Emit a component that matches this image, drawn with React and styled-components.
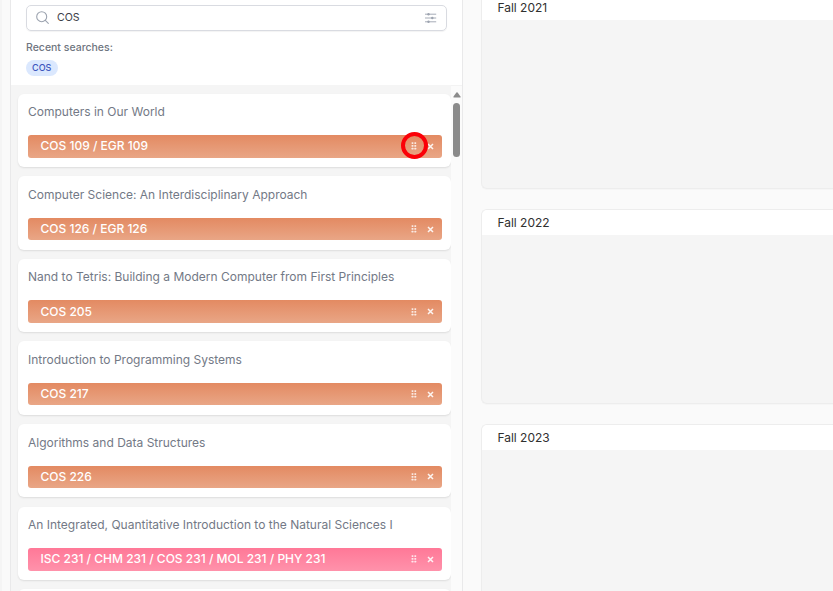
import React from "react";
import styled, { createGlobalStyle } from "styled-components";

const GlobalStyle = createGlobalStyle`
  *, *::before, *::after { box-sizing: border-box; }
  body {
    margin: 0;
    overflow: hidden;
    background: #fafafa;
    font-family: Inter, "Liberation Sans", sans-serif;
  }
`;

const Page = styled.div`
  display: flex;
  width: 100vw;
  height: 100vh;
  overflow: hidden;
`;

const LeftGutter = styled.div`
  flex: none;
  width: 10px;
  border-left: 2px solid #f5f5f5;
`;

const SearchPanel = styled.aside`
  flex: none;
  display: flex;
  flex-direction: column;
  width: 453px;
  border: solid #e9e9ea;
  border-width: 0 1px;
`;

const SearchHeader = styled.header`
  flex: none;
  height: 85px;
  padding: 5px 15px 0;
  background: #fff;
`;

const SearchBox = styled.label`
  display: flex;
  align-items: center;
  height: 26px;
  padding: 0 9px 1px 9px;
  border: 1px solid #d9dbe1;
  border-radius: 5px;
  box-shadow: 0 1px 1px rgba(0, 0, 0, 0.05);
`;

const SearchInput = styled.input`
  flex: 1;
  min-width: 0;
  margin-left: 8px;
  padding: 0;
  border: 0;
  outline: 0;
  background: transparent;
  color: #3d4149;
  font: 400 10.6px/18px Inter, sans-serif;
`;

const RecentLabel = styled.div`
  margin-top: 9px;
  color: #6f7580;
  font-size: 10.5px;
  font-weight: 500;
  line-height: 16px;
`;

const RecentChip = styled.button`
  display: block;
  width: 31.5px;
  height: 15.5px;
  margin-top: 4px;
  padding: 0;
  border: 0;
  border-radius: 8px;
  background: #dbe8fe;
  color: #3c55bd;
  font: 500 9px/15px Inter, sans-serif;
`;

const ResultsArea = styled.div`
  flex: 1;
  min-height: 0;
  display: flex;
  background: #f5f5f5;
`;

const ResultList = styled.div`
  flex: 1;
  display: flex;
  flex-direction: column;
  gap: 9.3px;
  padding: 8.7px 0 0 7.3px;
  overflow: hidden;
`;

const ResultCard = styled.article`
  flex: none;
  height: 73.3px;
  padding: 9.6px 8.7px 0 9.7px;
  border-radius: 6px;
  background: #fff;
  box-shadow: 0 1px 2px rgba(0, 0, 0, 0.1);
`;

const ResultTitle = styled.div`
  height: 32px;
  color: #737986;
  font-size: 12px;
  line-height: 18px;
  white-space: nowrap;
`;

const tones = {
  orange: "linear-gradient(#e38a62, #e9a686)",
  pink: "linear-gradient(#ff7897, #ff92ab)",
};

const CourseBar = styled.div`
  display: flex;
  align-items: center;
  height: 22.3px;
  padding: 0 7px 0 12.5px;
  border-radius: 3px;
  background: ${({ $tone }) => tones[$tone]};
  color: #fff;
`;

const CourseCode = styled.span`
  flex: 1;
  font-size: 12px;
  font-weight: 500;
  line-height: 18px;
  white-space: nowrap;
`;

const BarActions = styled.span`
  display: flex;
  align-items: center;
  gap: 8px;
`;

const DragHandle = styled.span`
  position: relative;
  display: flex;
  width: 8px;
  height: 10px;
`;

const HighlightRing = styled.span`
  position: absolute;
  top: -9.4px;
  left: -9.8px;
  width: 27px;
  height: 27px;
  border: 4px solid #fb0007;
  border-radius: 50%;
  z-index: 1;
`;

const Scrollbar = styled.div`
  flex: none;
  display: flex;
  flex-direction: column;
  align-items: center;
  width: 11px;
  padding-top: 6px;
  background: #fbfbfb;
  border-top: 1px solid #f3f3f3;
`;

const ScrollThumb = styled.div`
  width: 7px;
  height: 54px;
  margin-top: 5px;
  border-radius: 4px;
  background: #8b8b8b;
`;

const Planner = styled.main`
  flex: 1;
  display: flex;
  flex-direction: column;
  gap: 20px;
  margin-top: -5.6px;
  padding-left: 18.4px;
  overflow: hidden;
`;

const Semester = styled.section`
  flex: none;
  height: 194.7px;
  border: 1px solid #ededed;
  border-right: 0;
  border-radius: 6px 0 0 6px;
  background: #f5f5f5;
  box-shadow: 0 1px 1px rgba(0, 0, 0, 0.02);
  overflow: hidden;
`;

const SemesterTitle = styled.h2`
  height: 25px;
  margin: 0;
  padding-left: 15px;
  background: #fff;
  color: #303030;
  font-size: 12px;
  font-weight: 400;
  line-height: 25.4px;
`;

const SearchIcon = () => (
  <svg width="13" height="13" viewBox="0 0 13 13" fill="none" stroke="#9ca3af" strokeWidth="1.1" strokeLinecap="round">
    <circle cx="5.7" cy="5.7" r="5" />
    <path d="M9.3 9.3 12.3 12.3" />
  </svg>
);

const FilterIcon = () => (
  <svg width="13" height="12" viewBox="0 0 13 12" fill="none" stroke="#9ca3af" strokeWidth="0.9">
    <path d="M1 2.2h11.2M1 6h11.2M1 9.8h11.2" />
    <g fill="#9ca3af" stroke="none">
      <circle cx="4.5" cy="2.2" r="1.2" />
      <circle cx="8.3" cy="6" r="1.2" />
      <circle cx="4.5" cy="9.8" r="1.2" />
    </g>
  </svg>
);

const GripIcon = () => (
  <svg width="8" height="10" viewBox="0 0 8 10" fill="#fff" fillOpacity="0.8">
    {[1.2, 4, 6.8].map((y) => (
      <React.Fragment key={y}>
        <rect x="1.6" y={y} width="1.8" height="1.8" rx="0.4" />
        <rect x="4.4" y={y} width="1.8" height="1.8" rx="0.4" />
      </React.Fragment>
    ))}
  </svg>
);

const CloseIcon = () => (
  <svg width="9" height="9" viewBox="0 0 9 9" stroke="#fff" strokeOpacity="0.9" strokeWidth="1.5">
    <path d="M2 2l5 5M7 2l-5 5" />
  </svg>
);

const ArrowUp = () => (
  <svg width="8" height="6" viewBox="0 0 8 6" fill="#8b8b8b">
    <path d="M3.4.6a.8.8 0 0 1 1.2 0L7.5 4.6c.3.5 0 .9-.5.9H1c-.5 0-.8-.4-.5-.9z" />
  </svg>
);

const courses = [
  { title: "Computers in Our World", code: "COS 109 / EGR 109", tone: "orange", highlighted: true },
  { title: "Computer Science: An Interdisciplinary Approach", code: "COS 126 / EGR 126", tone: "orange" },
  { title: "Nand to Tetris: Building a Modern Computer from First Principles", code: "COS 205", tone: "orange" },
  { title: "Introduction to Programming Systems", code: "COS 217", tone: "orange" },
  { title: "Algorithms and Data Structures", code: "COS 226", tone: "orange" },
  {
    title: "An Integrated, Quantitative Introduction to the Natural Sciences I",
    code: "ISC 231 / CHM 231 / COS 231 / MOL 231 / PHY 231",
    tone: "pink",
  },
];

const Course = ({ title, code, tone, highlighted }) => (
  <ResultCard>
    <ResultTitle>{title}</ResultTitle>
    <CourseBar $tone={tone}>
      <CourseCode>{code}</CourseCode>
      <BarActions>
        <DragHandle>
          <GripIcon />
          {highlighted && <HighlightRing />}
        </DragHandle>
        <CloseIcon />
      </BarActions>
    </CourseBar>
  </ResultCard>
);

export default function App() {
  return (
    <>
      <GlobalStyle />
      <Page>
        <LeftGutter />
        <SearchPanel>
          <SearchHeader>
            <SearchBox>
              <SearchIcon />
              <SearchInput defaultValue="COS" aria-label="Search courses" />
              <FilterIcon />
            </SearchBox>
            <RecentLabel>Recent searches:</RecentLabel>
            <RecentChip>COS</RecentChip>
          </SearchHeader>
          <ResultsArea>
            <ResultList>
              {courses.map((course) => (
                <Course key={course.code} {...course} />
              ))}
              <ResultCard />
            </ResultList>
            <Scrollbar>
              <ArrowUp />
              <ScrollThumb />
            </Scrollbar>
          </ResultsArea>
        </SearchPanel>
        <Planner>
          {["Fall 2021", "Fall 2022", "Fall 2023"].map((term) => (
            <Semester key={term}>
              <SemesterTitle>{term}</SemesterTitle>
            </Semester>
          ))}
        </Planner>
      </Page>
    </>
  );
}
